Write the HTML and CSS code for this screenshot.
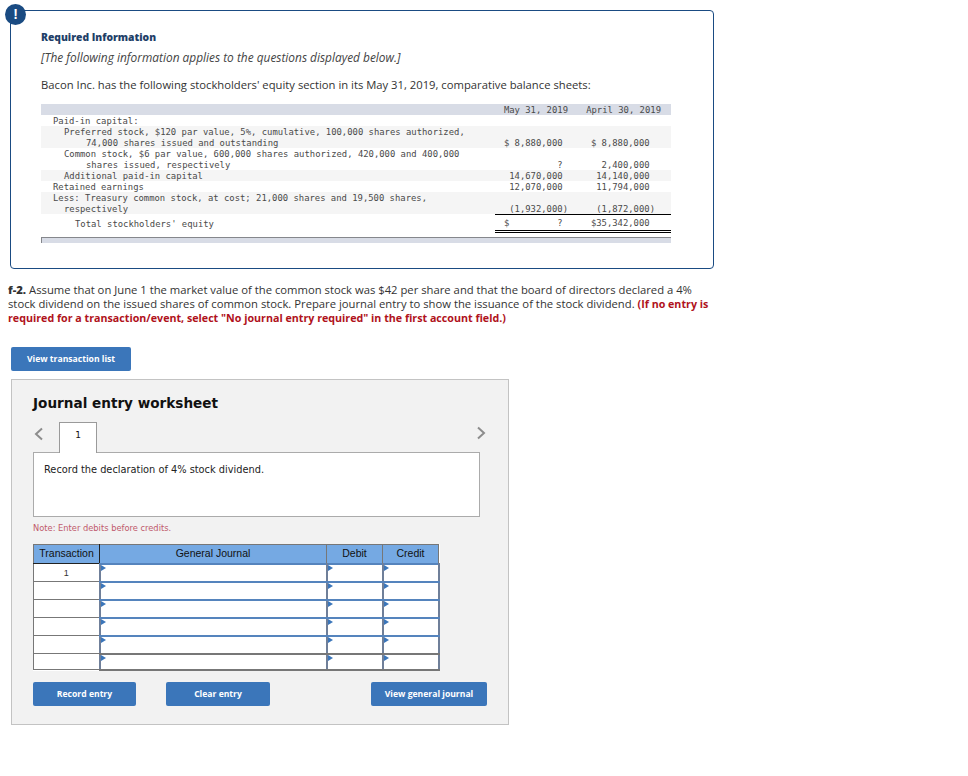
FILE: index.html
```
<!DOCTYPE html>
<html lang="en">
<head>
<meta charset="utf-8">
<title>Journal entry worksheet</title>
<link rel="stylesheet" href="styles.css">
</head>
<body>
<section class="alert">
  <span class="alert-badge">!</span>
  <h2 class="alert-title">Required Information</h2>
  <p class="alert-note">[The following information applies to the questions displayed below.]</p>
  <p class="alert-intro">Bacon Inc. has the following stockholders' equity section in its May 31, 2019, comparative balance sheets:</p>
  <table class="equity">
    <colgroup><col class="col-label"><col class="col-val"><col class="col-val"></colgroup>
    <tr class="head"><td></td><td class="v1">May 31, 2019</td><td class="v2 april">April 30, 2019</td></tr>
    <tr><td class="i1">Paid-in capital:</td><td></td><td></td></tr>
    <tr class="alt"><td class="i2">Preferred stock, $120 par value, 5%, cumulative, 100,000 shares authorized,<span class="wrap i4b">74,000 shares issued and outstanding</span></td><td class="v1">$ 8,880,000 </td><td class="v2">$ 8,880,000 </td></tr>
    <tr><td class="i2">Common stock, $6 par value, 600,000 shares authorized, 420,000 and 400,000<span class="wrap i4b">shares issued, respectively</span></td><td class="v1">? </td><td class="v2">2,400,000 </td></tr>
    <tr class="alt"><td class="i2">Additional paid-in capital</td><td class="v1">14,670,000 </td><td class="v2">14,140,000 </td></tr>
    <tr><td class="i1">Retained earnings</td><td class="v1">12,070,000 </td><td class="v2">11,794,000 </td></tr>
    <tr class="alt"><td class="i1">Less: Treasury common stock, at cost; 21,000 shares and 19,500 shares,<span class="wrap i2b">respectively</span></td><td class="v1 rule">(1,932,000)</td><td class="v2 rule">(1,872,000)</td></tr>
    <tr class="total"><td class="i3">Total stockholders' equity</td><td class="v1 dbl">$         ? </td><td class="v2 dbl">$35,342,000 </td></tr>
  </table>
  <div class="equity-foot"></div>
</section>

<p class="question"><b>f-2.</b> Assume that on June 1 the market value of the common stock was $42 per share and that the board of directors declared a 4% stock dividend on the issued shares of common stock. Prepare journal entry to show the issuance of the stock dividend. <strong>(If no entry is required for a transaction/event, select "No journal entry required" in the first account field.)</strong></p>

<button class="btn btn-list" type="button">View transaction list</button>

<section class="sheet">
  <h1 class="sheet-title">Journal entry worksheet</h1>
  <div class="tabs">
    <svg class="chev" width="11" height="14" viewBox="0 0 11 14"><path d="M9 1.5 3 7l6 5.5" fill="none" stroke="#8d8d8d" stroke-width="2"/></svg>
    <span class="tab">1</span>
    <svg class="chev chev-next" width="11" height="14" viewBox="0 0 11 14"><path d="M2 1.5 8 7l-6 5.5" fill="none" stroke="#8d8d8d" stroke-width="2"/></svg>
  </div>
  <div class="desc">Record the declaration of 4% stock dividend.</div>
  <p class="note">Note: Enter debits before credits.</p>
  <table class="journal">
    <colgroup><col class="c-t"><col class="c-g"><col class="c-d"><col class="c-c"></colgroup>
    <tr><th>Transaction</th><th>General Journal</th><th>Debit</th><th>Credit</th></tr>
    <tr><td class="tx">1</td><td class="in"></td><td class="in"></td><td class="in"></td></tr>
    <tr><td class="tx"></td><td class="in"></td><td class="in"></td><td class="in"></td></tr>
    <tr><td class="tx"></td><td class="in"></td><td class="in"></td><td class="in"></td></tr>
    <tr><td class="tx"></td><td class="in"></td><td class="in"></td><td class="in"></td></tr>
    <tr class="fifth"><td class="tx"></td><td class="in"></td><td class="in"></td><td class="in"></td></tr>
    <tr class="last"><td class="tx"></td><td class="in"></td><td class="in"></td><td class="in"></td></tr>
  </table>
  <div class="actions">
    <button class="btn btn-a" type="button">Record entry</button>
    <button class="btn btn-a" type="button">Clear entry</button>
    <button class="btn btn-v" type="button">View general journal</button>
  </div>
</section>
</body>
</html>
```

FILE: styles.css
```
* { box-sizing: border-box; }
body {
  margin: 0;
  background: #fff;
  font-family: "Open Sans", "Liberation Sans", sans-serif;
  color: #333;
}
.alert {
  position: relative;
  width: 704px;
  height: 259px;
  margin: 10px 0 0 10px;
  padding: 20px 0 0 30px;
  border: 1px solid #1a4b82;
  border-radius: 4px;
}
.alert-badge {
  position: absolute;
  left: -6px;
  top: -7px;
  width: 21px;
  height: 21px;
  border-radius: 50%;
  background: #1a4b82;
  color: #fff;
  font: bold 14px/21px "Liberation Sans", sans-serif;
  text-align: center;
}
.alert-title {
  margin: 0;
  font-size: 10.3px;
  line-height: 13px;
  font-weight: 800;
  color: #1f3f68;
}
.alert-note {
  margin: 6px 0 0;
  font-size: 11.9px;
  line-height: 14px;
  font-style: italic;
  color: #444;
}
.alert-intro {
  margin: 14px 0 0;
  font-size: 11.25px;
  line-height: 14px;
  color: #333;
}
.equity {
  width: 630px;
  margin-top: 12px;
  border-collapse: collapse;
  table-layout: fixed;
  font-family: "DejaVu Sans Mono", "Liberation Mono", monospace;
  font-size: 8.9px;
  line-height: 10px;
  color: #4a4a4a;
}
.col-label { width: 454px; }
.col-val { width: 88px; }
.equity td {
  padding: 1px 0 0;
  vertical-align: bottom;
  white-space: pre;
}
.head td { background: #d8dce6; height: 11px; }
.alt td { background: #f5f5f5; }
.wrap { display: block; padding-top: 1px; }
.i1 { padding-left: 12px !important; }
.i2 { padding-left: 23px !important; }
.i3 { padding-left: 34px !important; }
.i4b { padding-left: 22px; }
.i2b { padding-left: 11px; }
.v1 { text-align: right; padding-right: 15px !important; }
.v2 { text-align: right; padding-right: 16px !important; }
.april { padding-right: 10px !important; }
.rule { border-bottom: 1px solid #000; }
.total td { height: 17px; vertical-align: bottom; padding-bottom: 2px; }
.dbl { border-bottom: 3px double #000; }
.equity-foot {
  width: 630px;
  height: 6px;
  margin-top: 4px;
  background: #d8dce6;
  border-top: 1px solid #85878c;
  border-left: 1px solid #85878c;
}
.question {
  width: 706px;
  margin: 14px 0 0 8px;
  font-size: 11.27px;
  line-height: 14px;
  color: #333;
}
.question b { font-weight: 800; }
.question strong { font-weight: 700; font-size: 10.7px; color: #b0121b; }
.btn {
  display: block;
  height: 24px;
  padding: 0;
  border: 0;
  border-radius: 2px;
  background: #3b76ba;
  color: #fff;
  font: bold 8.6px/24px "Open Sans", "Liberation Sans", sans-serif;
  text-align: center;
}
.btn-list { width: 120px; margin: 22px 0 0 11px; }
.sheet {
  width: 498px;
  height: 346px;
  margin: 8px 0 0 11px;
  padding: 0 0 0 21px;
  background: #f2f2f2;
  border: 1px solid #c3c3c3;
}
.sheet-title {
  margin: 14px 0 0;
  font: bold 13.6px/18px "DejaVu Sans", Verdana, sans-serif;
  color: #111;
}
.tabs {
  display: flex;
  align-items: flex-start;
  height: 30px;
  margin-top: 10px;
}
.chev { margin: 5px 15px 0 0; }
.chev-next { margin: 4px 0 0 379px; }
.tab {
  position: relative;
  width: 38px;
  height: 31px;
  background: #fff;
  border: 1px solid #9a9a9a;
  border-bottom: 0;
  text-align: center;
  font: 9px/25px "DejaVu Sans", Verdana, sans-serif;
  color: #111;
  z-index: 1;
}
.desc {
  width: 447px;
  height: 65px;
  padding: 10px 10px 0;
  background: #fff;
  border: 1px solid #ababab;
  font: 9.8px/14px "DejaVu Sans", Verdana, sans-serif;
  color: #222;
}
.note {
  margin: 6px 0 0;
  font: 8.3px/11px "DejaVu Sans", Verdana, sans-serif;
  color: #c05a6c;
}
.journal {
  width: 405px;
  margin-top: 10px;
  border-collapse: collapse;
  table-layout: fixed;
  background: #fff;
}
.c-t { width: 66px; }
.c-g { width: 227px; }
.c-d { width: 56px; }
.c-c { width: 56px; }
.journal th {
  height: 19px;
  padding: 0;
  vertical-align: top;
  background: #75a9e3;
  border: 1px solid #777;
  border-bottom: 1px solid #222;
  font: 10.5px/17px "Liberation Sans", sans-serif;
  color: #111;
}
.journal th:first-child { border-right-color: #222; }
.journal td {
  height: 18px;
  padding: 0;
  border: 1px solid #777;
  font: 9px/16px "Liberation Sans", sans-serif;
  text-align: center;
  color: #333;
}
.journal td.in {
  position: relative;
  border: 2px solid #5584bd;
  border-right-color: #6f7f99;
  border-left-color: #6f7f99;
}
.journal .fifth td.in { border-bottom-color: #777; }
.journal .last td { height: 16px; }
.journal .last td.in { border-bottom-color: #777; }
.journal td.in::before {
  content: "";
  position: absolute;
  left: 0;
  top: 0;
  border-left: 5px solid #3b76ba;
  border-top: 3px solid transparent;
  border-bottom: 3px solid transparent;
}
.actions {
  display: flex;
  margin-top: 11px;
}
.btn-a { width: 103px; margin-right: 30px; }
.btn-a + .btn-a { width: 104px; margin-right: 101px; }
.btn-v { width: 116px; }
```
